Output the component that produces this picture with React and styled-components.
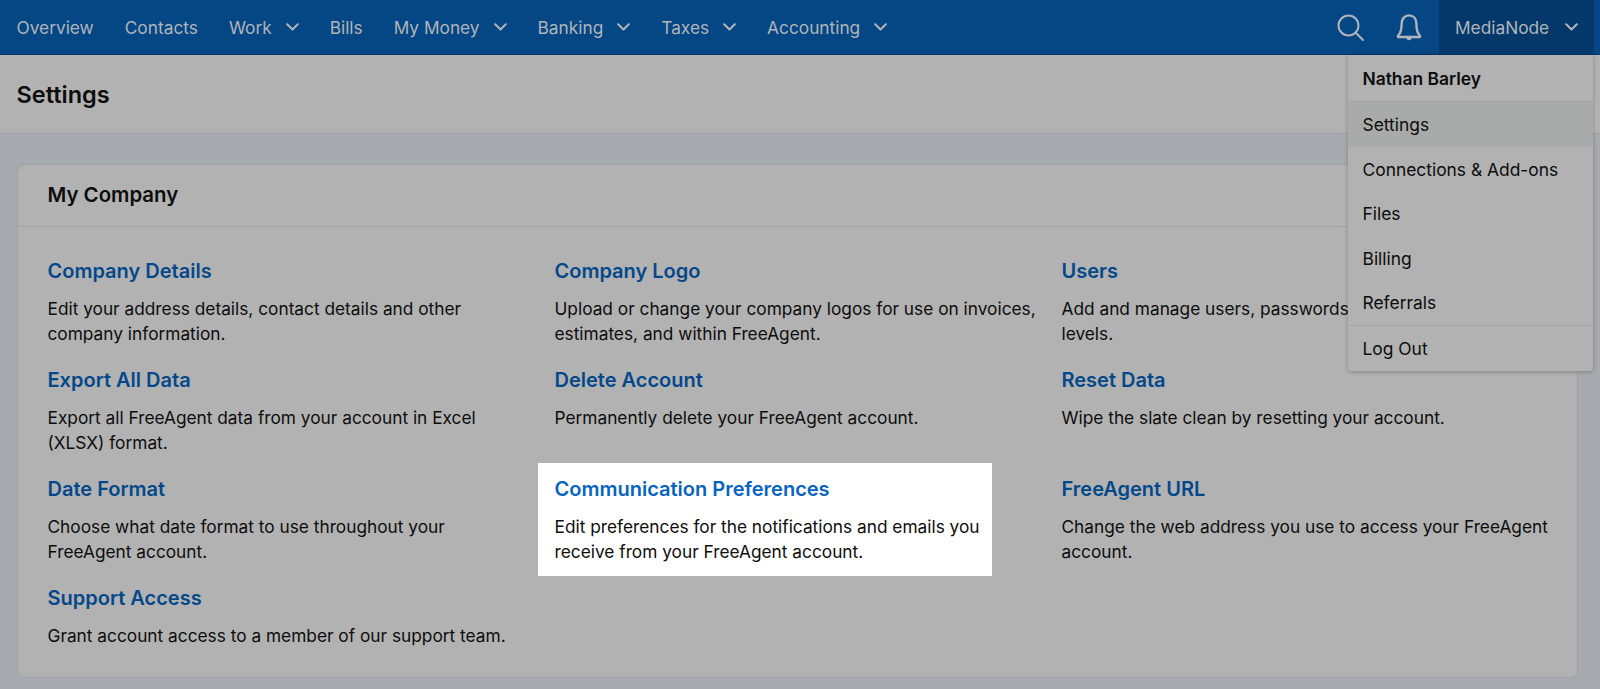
import styled, { createGlobalStyle } from "styled-components";

const GlobalStyle = createGlobalStyle`
  html, body {
    margin: 0;
    padding: 0;
    background: #a7aaae;
  }
  body {
    font-family: Inter, "Liberation Sans", sans-serif;
    overflow: hidden;
  }
`;

const navLinks = [
  { label: "Overview" },
  { label: "Contacts" },
  { label: "Work", menu: true },
  { label: "Bills" },
  { label: "My Money", menu: true },
  { label: "Banking", menu: true },
  { label: "Taxes", menu: true },
  { label: "Accounting", menu: true },
];

const settings = [
  { title: "Company Details", text: "Edit your address details, contact details and other company information." },
  { title: "Company Logo", text: "Upload or change your company logos for use on invoices, estimates, and within FreeAgent." },
  { title: "Users", text: "Add and manage users, passwords and permission levels.", narrow: true },
  { title: "Export All Data", text: "Export all FreeAgent data from your account in Excel (XLSX) format." },
  { title: "Delete Account", text: "Permanently delete your FreeAgent account." },
  { title: "Reset Data", text: "Wipe the slate clean by resetting your account." },
  { title: "Date Format", text: "Choose what date format to use throughout your FreeAgent account.", narrow: true },
  { title: "Communication Preferences", text: "Edit preferences for the notifications and emails you receive from your FreeAgent account.", highlight: true },
  { title: "FreeAgent URL", text: "Change the web address you use to access your FreeAgent account." },
  { title: "Support Access", text: "Grant account access to a member of our support team." },
];

const Chevron = () => (
  <ChevronIcon viewBox="0 0 13 8" fill="none" stroke="#b0b5ba" strokeWidth="2" strokeLinecap="round" strokeLinejoin="round">
    <path d="M1.2 1.2 6.5 6.5l5.3-5.3" />
  </ChevronIcon>
);

const App = () => {
  return (
    <>
      <GlobalStyle />
      <Page>
        <TopNav>
          <NavLinks>
            {navLinks.map((link) => (
              <NavLink key={link.label}>
                {link.label}
                {link.menu && <Chevron />}
              </NavLink>
            ))}
          </NavLinks>
          <NavRight>
            <NavIcon width="27" height="27" viewBox="0 0 27 27" fill="none" stroke="#b0b5ba" strokeWidth="2" strokeLinecap="round">
              <circle cx="11.5" cy="11.5" r="10" />
              <path d="M18.8 18.8 26 26" />
            </NavIcon>
            <NavIcon $last width="26" height="29" viewBox="0 0 26 29" fill="none" stroke="#b0b5ba" strokeWidth="2.4" strokeLinejoin="round">
              <path d="M13 2.4c-4.6 0-7.4 3.7-7.4 8.6 0 6-.9 9.2-3.6 11.8v1.2h22v-1.2c-2.7-2.6-3.6-5.8-3.6-11.8 0-4.9-2.8-8.6-7.4-8.6Z" />
              <path d="M10 24.6c.3 1.6 1.6 2.7 3 2.7s2.7-1.1 3-2.7Z" fill="#b0b5ba" stroke="none" />
            </NavIcon>
            <AccountButton>
              MediaNode
              <Chevron />
            </AccountButton>
          </NavRight>
        </TopNav>

        <AccountMenu>
          <MenuName>Nathan Barley</MenuName>
          <MenuGroup>
            <MenuItem $active>Settings</MenuItem>
            <MenuItem>Connections &amp; Add-ons</MenuItem>
            <MenuItem>Files</MenuItem>
            <MenuItem>Billing</MenuItem>
            <MenuItem>Referrals</MenuItem>
          </MenuGroup>
          <MenuItem>Log Out</MenuItem>
        </AccountMenu>

        <PageHeader>
          <PageTitle>Settings</PageTitle>
        </PageHeader>

        <Content>
          <Card>
            <CardHeader>My Company</CardHeader>
            <SettingsGrid>
              {settings.map((item) => (
                <SettingsItem key={item.title} $highlight={item.highlight}>
                  <SettingsLink $highlight={item.highlight}>{item.title}</SettingsLink>
                  <SettingsText $narrow={item.narrow}>{item.text}</SettingsText>
                </SettingsItem>
              ))}
            </SettingsGrid>
          </Card>
        </Content>
      </Page>
    </>
  );
};

const Page = styled.div`
  position: relative;
  width: 1600px;
  height: 689px;
  overflow: hidden;
  color: #0d0d0d;
`;

const TopNav = styled.header`
  display: flex;
  justify-content: space-between;
  height: 55px;
  padding: 0 6px 0 16.5px;
  box-sizing: border-box;
  background: #054684;
  border-bottom: 1px solid #043a6e;
`;

const NavLinks = styled.nav`
  display: flex;
  align-items: center;
  gap: 31px;
`;

const NavLink = styled.a`
  display: flex;
  align-items: center;
  gap: 14px;
  font-size: 17.3px;
  color: #b0b5ba;
  cursor: pointer;
`;

const ChevronIcon = styled.svg`
  width: 13px;
  height: 8px;
`;

const NavRight = styled.div`
  display: flex;
  align-items: center;
`;

const NavIcon = styled.svg`
  margin-right: ${(props) => (props.$last ? "17px" : "32px")};
`;

const AccountButton = styled.div`
  display: flex;
  align-items: center;
  justify-content: space-between;
  height: 100%;
  width: 155px;
  padding: 0 16px;
  box-sizing: border-box;
  font-size: 17.3px;
  color: #b0b5ba;
  background: #04386a;
`;

const AccountMenu = styled.div`
  position: absolute;
  top: 55px;
  right: 7px;
  width: 245px;
  background: #b2b2b2;
  box-shadow: 0 1px 4px rgba(0, 0, 0, 0.25);
  border-radius: 0 0 3px 3px;
  z-index: 2;
  font-size: 17.4px;
`;

const MenuName = styled.div`
  height: 47px;
  line-height: 44px;
  padding: 2px 14.5px 0;
  font-weight: 600;
  border-bottom: 1px solid #a2a3a4;
  box-sizing: border-box;
`;

const MenuGroup = styled.div`
  border-bottom: 1px solid #a2a3a4;
`;

const MenuItem = styled.div`
  height: 44.6px;
  line-height: 42.6px;
  padding: 2px 14.5px 0;
  box-sizing: border-box;
  background: ${(props) => (props.$active ? "#a9abab" : "transparent")};
`;

const PageHeader = styled.div`
  height: 79px;
  display: flex;
  align-items: center;
  padding: 0 16.5px;
  box-sizing: border-box;
  background: #b2b2b2;
  border-bottom: 1px solid #a0a2a5;
`;

const PageTitle = styled.h1`
  margin: 0;
  font-size: 23.5px;
  font-weight: 600;
`;

const Content = styled.main`
  padding: 30px 22px 0 17px;
`;

const Card = styled.section`
  background: #b2b2b2;
  border: 1px solid #a0a2a5;
  border-radius: 8px;
`;

const CardHeader = styled.h2`
  margin: 0;
  height: 62px;
  line-height: 60px;
  padding: 0 29.5px;
  box-sizing: border-box;
  font-size: 20.4px;
  font-weight: 600;
  border-bottom: 1px solid #a0a2a5;
`;

const SettingsGrid = styled.div`
  display: grid;
  grid-template-columns: repeat(3, 507px);
  grid-template-rows: repeat(3, 88px) auto;
  row-gap: 21px;
  padding: 31px 29.5px 29px;
`;

const SettingsItem = styled.div`
  ${(props) =>
    props.$highlight &&
    `
    position: relative;
    background: #fff;
    width: 454px;
    margin: -13px 0 -12px -17px;
    padding: 13px 8px 12px 17px;
    box-sizing: border-box;
  `}
`;

const SettingsLink = styled.a`
  display: block;
  font-size: 20px;
  font-weight: 600;
  line-height: 26px;
  color: ${(props) => (props.$highlight ? "#0764c2" : "#05488a")};
  cursor: pointer;
`;

const SettingsText = styled.p`
  margin: 12px 0 0;
  max-width: ${(props) => (props.$narrow ? "420px" : "488px")};
  font-size: 17.3px;
  line-height: 25px;
`;

export default App;
